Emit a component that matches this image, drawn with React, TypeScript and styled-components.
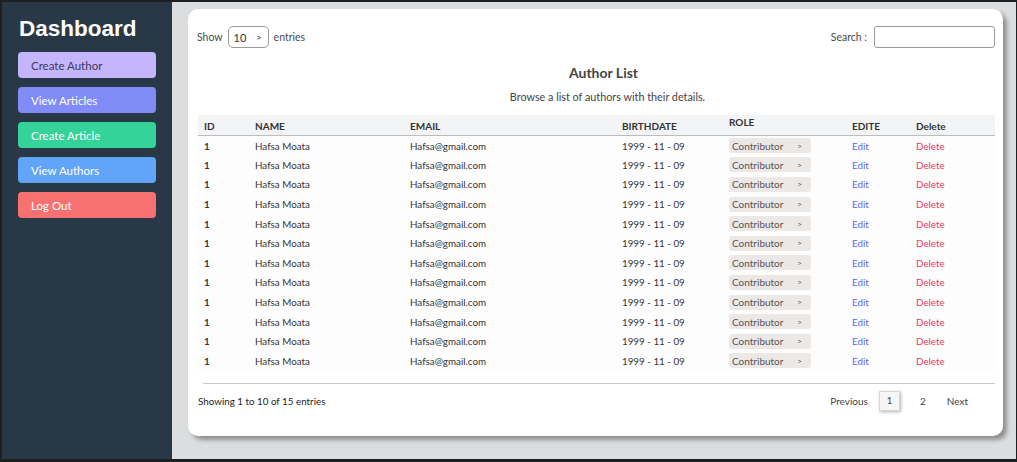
import React from "react";
import styled, { createGlobalStyle } from "styled-components";

const GlobalStyle = createGlobalStyle`
  html, body { margin: 0; padding: 0; background: #1e1f21; }
  body { font-family: Lato, "Open Sans", Arial, sans-serif; }
  * { box-sizing: border-box; }
`;

const Frame = styled.div`
  width: 1017px;
  height: 462px;
  padding: 2px 2px 3px 2px;
  background: #1e1f21;
  display: flex;
`;

const Sidebar = styled.aside`
  width: 170px;
  background: #293847;
  padding: 14px 16px 0 16px;
  display: flex;
  flex-direction: column;
  gap: 9px;
`;

const Title = styled.h1`
  margin: 0 0 1px 1px;
  font-family: "Liberation Sans", Arial, sans-serif;
  font-weight: 700;
  font-size: 22.5px;
  line-height: 26px;
  color: #ffffff;
`;

const NavButton = styled.button<{ $bg: string; $dark?: boolean }>`
  height: 26px;
  width: 138px;
  border: none;
  border-radius: 4px;
  background: ${(p) => p.$bg};
  color: ${(p) => (p.$dark ? "#3e3a55" : "#ffffff")};
  font-family: Lato, "Open Sans", sans-serif;
  font-size: 11.5px;
  text-align: left;
  padding: 0 0 0 13px;
  cursor: pointer;
`;

const Main = styled.main`
  flex: 1;
  background: #dcdddf;
  padding: 7px 13px 0 16px;
`;

const Card = styled.section`
  height: 427px;
  background: #ffffff;
  border-radius: 10px;
  box-shadow: 4px 4px 4px rgba(0, 0, 0, 0.35);
  padding: 17px 8px 0 9px;
  display: flex;
  flex-direction: column;
`;

const TopBar = styled.div`
  display: flex;
  justify-content: space-between;
  align-items: center;
  height: 22px;
  font-size: 10.5px;
  color: #4a4a4a;
`;

const Group = styled.div`
  display: flex;
  align-items: center;
  gap: 5px;
`;

const SelectBox = styled.div`
  width: 41px;
  height: 22px;
  border: 1px solid #9a9a9a;
  border-radius: 5px;
  display: flex;
  align-items: center;
  padding-left: 5px;
  gap: 10px;
  font-size: 11px;
  color: #333;
  & span { font-size: 9px; }
`;

const SearchInput = styled.input`
  width: 121px;
  height: 22px;
  border: 1px solid #9a9a9a;
  border-radius: 3px;
  outline: none;
  margin-left: 2px;
`;

const Heading = styled.h2`
  margin: 16px 0 0 0;
  padding-left: 15px;
  text-align: center;
  font-size: 14px;
  line-height: 18px;
  font-weight: 700;
  color: #444;
`;

const Subtitle = styled.p`
  margin: 8px 0 0 0;
  padding-left: 23px;
  text-align: center;
  font-size: 10.8px;
  line-height: 14px;
  color: #444;
`;

const Table = styled.table`
  margin: 11px 0 0 1px;
  width: 797px;
  border-collapse: collapse;
  table-layout: fixed;
  font-size: 9.8px;
  color: #333;
`;

const HeadRow = styled.tr`
  background: #f3f4f6;
  border-bottom: 1px solid #bdbdbd;
`;

const Th = styled.th<{ $raise?: boolean }>`
  height: 20px;
  padding: ${(p) => (p.$raise ? "0 0 5px 6px" : "3px 0 0 6px")};
  text-align: left;
  font-weight: 700;
  font-size: 10px;
  color: #333;
`;

const Td = styled.td<{ $bold?: boolean }>`
  height: 19.6px;
  padding: 1px 0 0 6px;
  font-weight: ${(p) => (p.$bold ? 700 : 400)};
  white-space: nowrap;
`;

const Body = styled.tbody`
  background: #fdfdfd;
  & tr:last-child td { padding-bottom: 2px; height: 21px; }
`;

const RolePill = styled.span`
  display: inline-flex;
  justify-content: space-between;
  align-items: center;
  width: 82px;
  height: 15px;
  padding: 0 9px 0 3px;
  background: #ece8e6;
  border-radius: 3px;
  color: #555;
  font-size: 10px;
  & b { font-weight: 400; font-size: 8px; }
`;

const EditLink = styled.a`
  color: #5a67f0;
  text-decoration: none;
`;

const DeleteLink = styled.a`
  color: #f0385a;
  text-decoration: none;
`;

const Divider = styled.hr`
  margin: 11px 0 0 6px;
  width: 792px;
  border: none;
  border-top: 1px solid #c8c8c8;
`;

const Footer = styled.div`
  display: flex;
  justify-content: space-between;
  align-items: center;
  margin: 7px 0 0 1px;
  width: 797px;
  font-size: 9.8px;
  color: #222;
`;

const Pager = styled.div`
  display: flex;
  align-items: center;
  margin-right: 27px;
  color: #444;
  font-size: 10px;
`;

const PageLink = styled.span<{ $ml: number }>`
  margin-left: ${(p) => p.$ml}px;
`;

const PageButton = styled.span`
  margin-left: 11px;
  width: 21px;
  height: 20px;
  display: inline-flex;
  align-items: flex-start;
  justify-content: center;
  padding-top: 3px;
  background: #f6f6f6;
  border: 1px solid #d6d6d6;
  box-shadow: 1px 1px 3px rgba(0, 0, 0, 0.3);
  font-size: 9.5px;
  color: #444;
`;

const navItems = [
  { label: "Create Author", bg: "#c4b5fd", dark: true },
  { label: "View Articles", bg: "#818cf8" },
  { label: "Create Article", bg: "#34d399" },
  { label: "View Authors", bg: "#60a5fa" },
  { label: "Log Out", bg: "#f87171" },
];

const rows = Array.from({ length: 12 }, () => ({
  id: 1,
  name: "Hafsa Moata",
  email: "Hafsa@gmail.com",
  birth: "1999 - 11 - 09",
}));

export default function App() {
  return (
    <>
      <GlobalStyle />
      <Frame>
        <Sidebar>
          <Title>Dashboard</Title>
          {navItems.map((n) => (
            <NavButton key={n.label} $bg={n.bg} $dark={n.dark}>
              {n.label}
            </NavButton>
          ))}
        </Sidebar>
        <Main>
          <Card>
            <TopBar>
              <Group>
                Show
                <SelectBox>
                  10 <span>&gt;</span>
                </SelectBox>
                entries
              </Group>
              <Group>
                Search :
                <SearchInput />
              </Group>
            </TopBar>
            <Heading>Author List</Heading>
            <Subtitle>Browse a list of authors with their details.</Subtitle>
            <Table>
              <colgroup>
                <col style={{ width: 51 }} />
                <col style={{ width: 155 }} />
                <col style={{ width: 212 }} />
                <col style={{ width: 107 }} />
                <col style={{ width: 123 }} />
                <col style={{ width: 64 }} />
                <col style={{ width: 85 }} />
              </colgroup>
              <thead>
                <HeadRow>
                  <Th>ID</Th>
                  <Th>NAME</Th>
                  <Th>EMAIL</Th>
                  <Th>BIRTHDATE</Th>
                  <Th $raise>ROLE</Th>
                  <Th>EDITE</Th>
                  <Th>Delete</Th>
                </HeadRow>
              </thead>
              <Body>
                {rows.map((r, i) => (
                  <tr key={i}>
                    <Td $bold>{r.id}</Td>
                    <Td>{r.name}</Td>
                    <Td>{r.email}</Td>
                    <Td>{r.birth}</Td>
                    <Td>
                      <RolePill>
                        Contributor <b>&gt;</b>
                      </RolePill>
                    </Td>
                    <Td>
                      <EditLink href="#">Edit</EditLink>
                    </Td>
                    <Td>
                      <DeleteLink href="#">Delete</DeleteLink>
                    </Td>
                  </tr>
                ))}
              </Body>
            </Table>
            <Divider />
            <Footer>
              <span>Showing 1 to 10 of 15 entries</span>
              <Pager>
                <span>Previous</span>
                <PageButton>1</PageButton>
                <PageLink $ml={20}>2</PageLink>
                <PageLink $ml={21}>Next</PageLink>
              </Pager>
            </Footer>
          </Card>
        </Main>
      </Frame>
    </>
  );
}
